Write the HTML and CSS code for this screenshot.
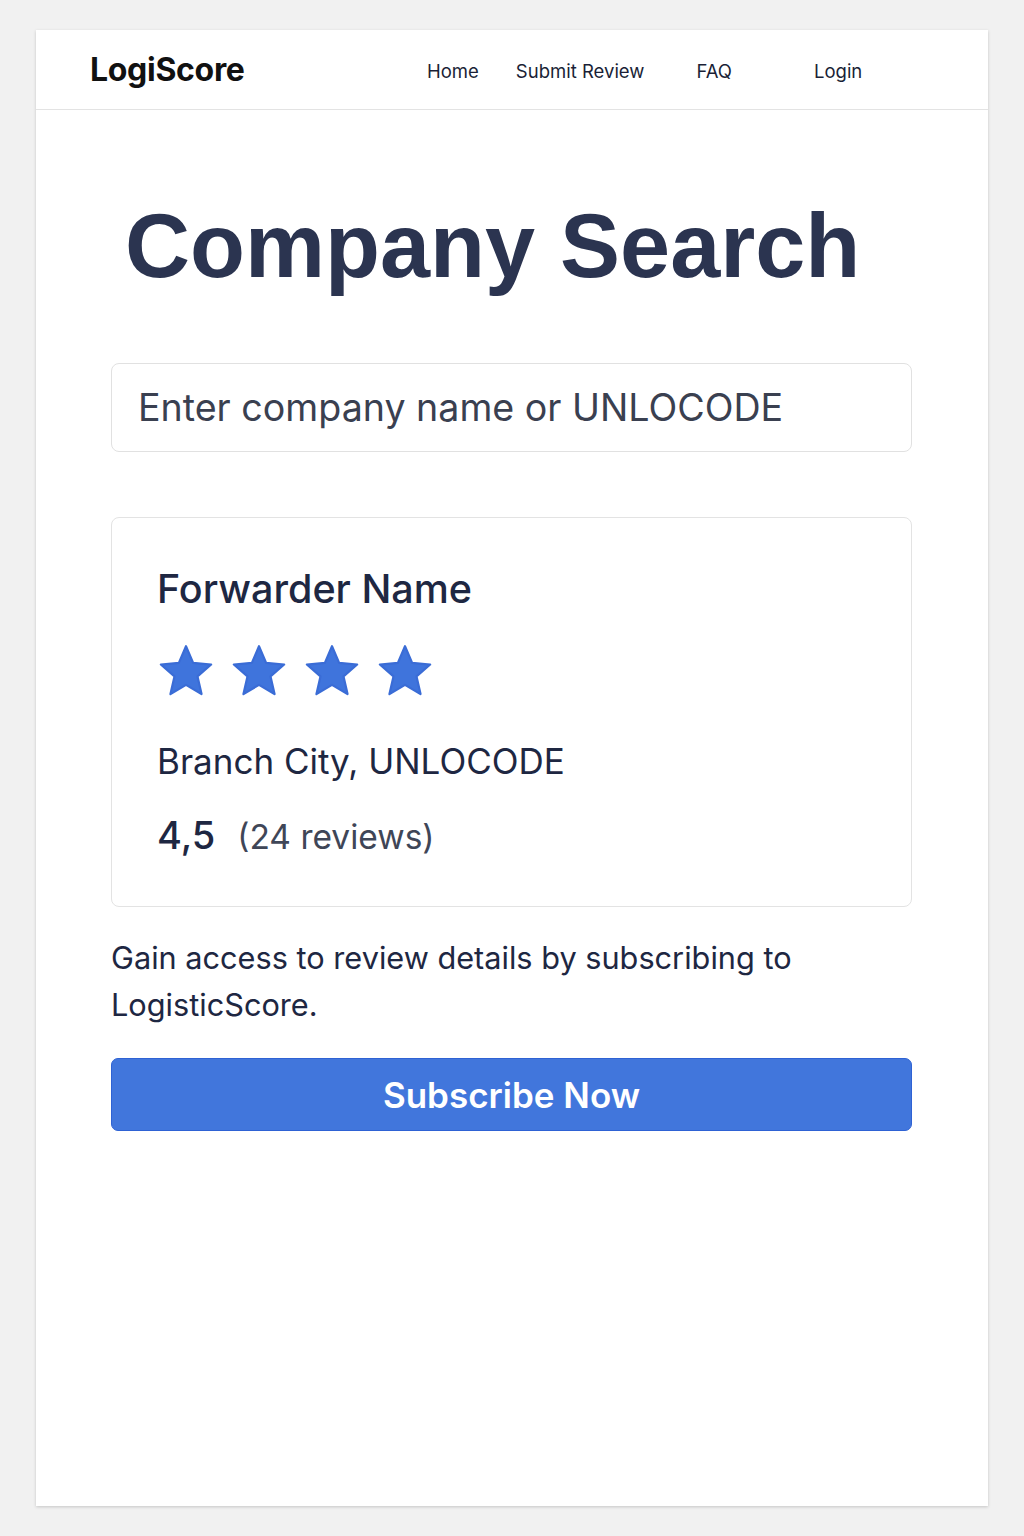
FILE: index.html
```html
<!DOCTYPE html>
<html lang="en">
<head>
<meta charset="utf-8">
<title>LogiScore - Company Search</title>
<link rel="stylesheet" href="styles.css">
</head>
<body>
<div class="page">
  <header class="header">
    <div class="logo">LogiScore</div>
    <nav class="nav">
      <a class="nav-home" href="#">Home</a>
      <a class="nav-submit" href="#">Submit Review</a>
      <a class="nav-faq" href="#">FAQ</a>
      <a class="nav-login" href="#">Login</a>
    </nav>
  </header>
  <main class="main">
    <h1 class="title">Company Search</h1>
    <input class="search" type="text" placeholder="Enter company name or UNLOCODE">
    <section class="card">
      <h2 class="card-name">Forwarder Name</h2>
      <div class="stars">
        <svg class="star" viewBox="1 0 98 92"><path d="M50 2 L62.93 32.2 L95.65 35.17 L70.92 56.8 L78.21 88.83 L50 72 L21.79 88.83 L29.08 56.8 L4.35 35.17 L37.07 32.2 Z"/></svg>
        <svg class="star" viewBox="1 0 98 92"><path d="M50 2 L62.93 32.2 L95.65 35.17 L70.92 56.8 L78.21 88.83 L50 72 L21.79 88.83 L29.08 56.8 L4.35 35.17 L37.07 32.2 Z"/></svg>
        <svg class="star" viewBox="1 0 98 92"><path d="M50 2 L62.93 32.2 L95.65 35.17 L70.92 56.8 L78.21 88.83 L50 72 L21.79 88.83 L29.08 56.8 L4.35 35.17 L37.07 32.2 Z"/></svg>
        <svg class="star" viewBox="1 0 98 92"><path d="M50 2 L62.93 32.2 L95.65 35.17 L70.92 56.8 L78.21 88.83 L50 72 L21.79 88.83 L29.08 56.8 L4.35 35.17 L37.07 32.2 Z"/></svg>
      </div>
      <p class="branch">Branch City, UNLOCODE</p>
      <p class="rating"><span class="score">4,5</span><span class="reviews">(24 reviews)</span></p>
    </section>
    <p class="notice">Gain access to review details by subscribing to LogisticScore.</p>
    <button class="subscribe" type="button">Subscribe Now</button>
  </main>
</div>
</body>
</html>
```
FILE: styles.css
```css
* { box-sizing: border-box; }
html, body { margin: 0; padding: 0; }
body {
  background: #f1f1f1;
  font-family: Inter, "Noto Sans", sans-serif;
  color: #1f2540;
  padding: 30px 36px 30px 36px;
}
.page {
  width: 952px;
  height: 1476px;
  background: #ffffff;
  box-shadow: 0 1px 3px rgba(0,0,0,0.18);
}
.header {
  height: 80px;
  border-bottom: 1px solid #e3e3e3;
  display: flex;
  align-items: center;
  padding-left: 54px;
}
.logo {
  font-size: 32px;
  font-weight: 700;
  color: #111111;
  letter-spacing: -0.3px;
  width: 337px;
}
.nav { display: flex; align-items: center; padding-top: 2px; }
.nav a {
  font-size: 18.5px;
  color: #1a1f36;
  text-decoration: none;
}
.nav-submit { margin-left: 37px; }
.nav-faq { margin-left: 52px; }
.nav-login { margin-left: 82px; }
.main {
  padding: 0 75px;
}
.title {
  margin: 86px 0 0 14px;
  font-family: "Liberation Sans", Arial, sans-serif;
  font-size: 90px;
  font-weight: 700;
  color: #2b3450;
  line-height: 100px;
  white-space: nowrap;
}
.search {
  display: block;
  width: 801px;
  height: 89px;
  margin-top: 67px;
  border: 1px solid #e1e1e1;
  border-radius: 8px;
  padding: 0 26px;
  font-family: Inter, "Noto Sans", sans-serif;
  font-size: 37.6px;
  color: #333a4a;
  background: #fff;
  outline: none;
}
.search::placeholder { color: #3a4050; }
.card {
  margin-top: 65px;
  width: 801px;
  height: 390px;
  border: 1px solid #e3e3e3;
  border-radius: 8px;
  padding: 48px 45px 0;
}
.card-name {
  margin: 0;
  font-size: 39.5px;
  font-weight: 500;
  color: #1e2742;
  line-height: 1.2;
}
.stars {
  display: flex;
  gap: 19px;
  margin-top: 31px;
  margin-left: 2px;
}
.star {
  width: 54px;
  height: 53px;
  fill: #3f74dc;
  stroke: #3a6cd6;
  stroke-width: 4;
  stroke-linejoin: round;
}
.branch {
  margin: 43px 0 0;
  font-size: 35px;
  color: #1e2742;
  line-height: 1.2;
}
.rating {
  margin: 31px 0 0;
  line-height: 1.2;
  display: flex;
  align-items: baseline;
}
.score {
  font-size: 38px;
  font-weight: 500;
  color: #1e2742;
}
.reviews {
  font-size: 33.5px;
  color: #3f4657;
  margin-left: 22px;
}
.notice {
  margin: 27px 0 0;
  font-size: 30.7px;
  line-height: 47px;
  color: #1e2742;
  width: 720px;
}
.subscribe {
  display: block;
  margin-top: 30px;
  width: 801px;
  height: 73px;
  background: #4176dc;
  border: 1px solid #2e62d4;
  border-radius: 7px;
  color: #ffffff;
  font-family: Inter, "Noto Sans", sans-serif;
  font-size: 35px;
  font-weight: 600;
  cursor: pointer;
}
```
